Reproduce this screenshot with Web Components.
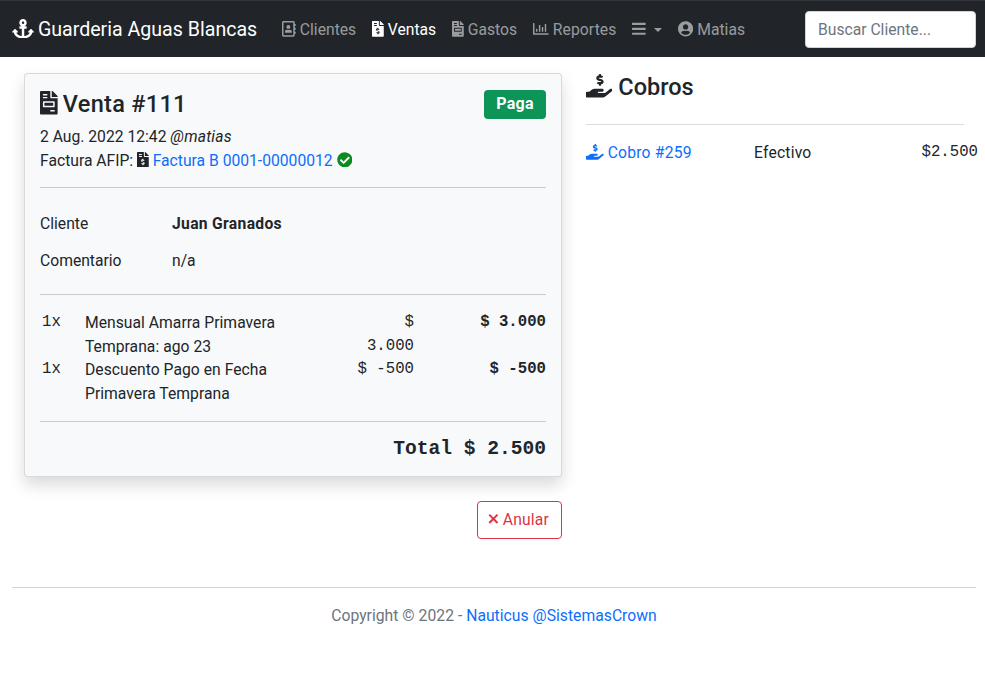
<!DOCTYPE html>
<html lang="es">
<head>
<meta charset="utf-8">
<title>Venta #111</title>
<style>
  html, body { margin: 0; background: #fff; }
  body {
    font-family: Roboto, "Noto Sans", sans-serif;
    font-size: 15.68px;
    line-height: 23.52px;
    color: #212529;
  }
</style>
</head>
<body>
<app-navbar></app-navbar>
<venta-page></venta-page>
<app-footer></app-footer>

<script>
const ICONS = {
  anchor: [576, 'M12.971 352h32.394C67.172 454.735 181.944 512 288 512c106.229 0 220.853-57.38 242.635-160h32.394c10.691 0 16.045-12.926 8.485-20.485l-67.029-67.029c-4.686-4.686-12.284-4.686-16.971 0l-67.029 67.029c-7.56 7.56-2.206 20.485 8.485 20.485h35.146c-20.29 54.317-84.963 86.588-144.117 94.015V256h52c6.627 0 12-5.373 12-12v-40c0-6.627-5.373-12-12-12h-52v-5.47c37.281-13.178 63.995-48.725 64-90.518C384.005 43.772 341.605.738 289.37.01 235.723-.739 192 42.525 192 96c0 41.798 26.716 77.35 64 90.53V192h-52c-6.627 0-12 5.373-12 12v40c0 6.627 5.373 12 12 12h52v190.015c-58.936-7.399-123.82-39.679-144.117-94.015h35.146c10.691 0 16.045-12.926 8.485-20.485l-67.029-67.029c-4.686-4.686-12.284-4.686-16.971 0L4.485 331.515C-3.074 339.074 2.28 352 12.971 352zM288 64c17.645 0 32 14.355 32 32s-14.355 32-32 32-32-14.355-32-32 14.355-32 32-32z'],
  book: [448, 'M436 160c6.6 0 12-5.4 12-12v-40c0-6.6-5.4-12-12-12h-20V48c0-26.5-21.5-48-48-48H48C21.5 0 0 21.5 0 48v416c0 26.5 21.5 48 48 48h320c26.5 0 48-21.5 48-48v-48h20c6.6 0 12-5.4 12-12v-40c0-6.6-5.4-12-12-12h-20v-64h20c6.6 0 12-5.4 12-12v-40c0-6.6-5.4-12-12-12h-20v-64h20zm-68 304H48V48h320v416zM208 256c35.3 0 64-28.7 64-64s-28.7-64-64-64-64 28.7-64 64 28.7 64 64 64zm-89.6 128h179.2c12.4 0 22.4-8.6 22.4-19.2v-19.2c0-31.8-30.1-57.6-67.2-57.6-10.8 0-18.7 8-44.8 8-26.9 0-33.4-8-44.8-8-37.1 0-67.2 25.8-67.2 57.6v19.2c0 10.6 10 19.2 22.4 19.2z'],
  dollar: [384, 'M377 105L279.1 7c-4.5-4.5-10.6-7-17-7H256v128h128v-6.1c0-6.3-2.5-12.4-7-16.9zm-153 31V0H24C10.7 0 0 10.7 0 24v464c0 13.3 10.7 24 24 24h336c13.3 0 24-10.7 24-24V160H248c-13.2 0-24-10.8-24-24zM64 72c0-4.42 3.58-8 8-8h80c4.42 0 8 3.58 8 8v16c0 4.42-3.58 8-8 8H72c-4.42 0-8-3.58-8-8V72zm0 64c0-4.42 3.58-8 8-8h80c4.42 0 8 3.58 8 8v16c0 4.42-3.58 8-8 8H72c-4.42 0-8-3.58-8-8v-16zm144 263.88V424c0 4.42-3.58 8-8 8h-16c-4.42 0-8-3.58-8-8v-24.29c-11.29-.58-22.27-4.52-31.37-11.35-3.9-2.93-4.1-8.77-.57-12.14l11.75-11.21c2.77-2.64 6.89-2.76 10.13-.73 3.87 2.42 8.26 3.72 12.82 3.72h28.11c6.5 0 11.8-5.92 11.8-13.19 0-5.95-3.61-11.19-8.77-12.73l-45-13.5c-18.59-5.58-31.58-23.42-31.58-43.39 0-24.52 19.05-44.44 42.67-45.07V232c0-4.42 3.58-8 8-8h16c4.42 0 8 3.58 8 8v24.29c11.29.58 22.27 4.51 31.37 11.35 3.9 2.93 4.1 8.77.57 12.14l-11.75 11.21c-2.77 2.64-6.89 2.76-10.13.73-3.87-2.43-8.26-3.72-12.82-3.72h-28.11c-6.5 0-11.8 5.92-11.8 13.19 0 5.95 3.61 11.19 8.77 12.73l45 13.5c18.59 5.58 31.58 23.42 31.58 43.39 0 24.53-19.05 44.44-42.67 45.07z'],
  invoice: [384, 'M288 256H96v64h192v-64zm89-151L279.1 7c-4.5-4.5-10.6-7-17-7H256v128h128v-6.1c0-6.3-2.5-12.4-7-16.9zm-153 31V0H24C10.7 0 0 10.7 0 24v464c0 13.3 10.7 24 24 24h336c13.3 0 24-10.7 24-24V160H248c-13.2 0-24-10.8-24-24zM64 72c0-4.42 3.58-8 8-8h80c4.42 0 8 3.58 8 8v16c0 4.42-3.58 8-8 8H72c-4.42 0-8-3.58-8-8V72zm0 64c0-4.42 3.58-8 8-8h80c4.42 0 8 3.58 8 8v16c0 4.42-3.58 8-8 8H72c-4.42 0-8-3.58-8-8v-16zm256 304c0 4.42-3.58 8-8 8h-80c-4.42 0-8-3.58-8-8v-16c0-4.42 3.58-8 8-8h80c4.42 0 8 3.58 8 8v16zm0-200v96c0 8.84-7.16 16-16 16H80c-8.84 0-16-7.16-16-16v-96c0-8.84 7.16-16 16-16h224c8.84 0 16 7.16 16 16z'],
  chart: [512, 'M396.8 352h22.4c6.4 0 12.8-6.4 12.8-12.8V108.8c0-6.4-6.4-12.8-12.8-12.8h-22.4c-6.4 0-12.8 6.4-12.8 12.8v230.4c0 6.4 6.4 12.8 12.8 12.8zm-192 0h22.4c6.4 0 12.8-6.4 12.8-12.8V140.8c0-6.4-6.4-12.8-12.8-12.8h-22.4c-6.4 0-12.8 6.4-12.8 12.8v198.4c0 6.4 6.4 12.8 12.8 12.8zm96 0h22.4c6.4 0 12.8-6.4 12.8-12.8V204.8c0-6.4-6.4-12.8-12.8-12.8h-22.4c-6.4 0-12.8 6.4-12.8 12.8v134.4c0 6.4 6.4 12.8 12.8 12.8zM496 400H48V80c0-8.84-7.16-16-16-16H16C7.16 64 0 71.16 0 80v336c0 17.67 14.33 32 32 32h464c8.84 0 16-7.16 16-16v-16c0-8.84-7.16-16-16-16zm-387.2-48h22.4c6.4 0 12.8-6.4 12.8-12.8v-70.4c0-6.4-6.4-12.8-12.8-12.8h-22.4c-6.4 0-12.8 6.4-12.8 12.8v70.4c0 6.4 6.4 12.8 12.8 12.8z'],
  bars: [448, 'M16 132h416c8.837 0 16-7.163 16-16V76c0-8.837-7.163-16-16-16H16C7.163 60 0 67.163 0 76v40c0 8.837 7.163 16 16 16zm0 160h416c8.837 0 16-7.163 16-16v-40c0-8.837-7.163-16-16-16H16c-8.837 0-16 7.163-16 16v40c0 8.837 7.163 16 16 16zm0 160h416c8.837 0 16-7.163 16-16v-40c0-8.837-7.163-16-16-16H16c-8.837 0-16 7.163-16 16v40c0 8.837 7.163 16 16 16z'],
  user: [496, 'M248 8C111 8 0 119 0 256s111 248 248 248 248-111 248-248S385 8 248 8zm0 96c48.6 0 88 39.4 88 88s-39.4 88-88 88-88-39.4-88-88 39.4-88 88-88zm0 344c-58.7 0-111.3-26.6-146.5-68.2 18.8-35.4 55.6-59.8 98.5-59.8 2.4 0 4.8.4 7.1 1.1 13 4.2 26.6 6.9 40.9 6.9 14.3 0 28-2.7 40.9-6.9 2.3-.7 4.7-1.1 7.1-1.1 42.9 0 79.7 24.4 98.5 59.8C359.3 421.4 306.7 448 248 448z'],
  hand: [576, 'M271.06,144.3l54.27,14.3a8.59,8.59,0,0,1,6.63,8.1c0,4.6-4.09,8.4-9.12,8.4h-35.6a30,30,0,0,1-11.19-2.2c-5.24-2.2-11.28-1.7-15.3,2l-19,17.5a11.68,11.68,0,0,0-2.25,2.66,11.42,11.42,0,0,0,3.88,15.74,83.42,83.42,0,0,0,34.51,11.5V240c0,8.8,7.83,16,17.37,16h17.37c9.55,0,17.38-7.2,17.38-16V222.4c32.93-3.6,57.84-31,53.5-63-3.15-23-22.46-41.3-46.56-47.7L282.68,97.4a8.59,8.59,0,0,1-6.63-8.1c0-4.6,4.09-8.4,9.12-8.4h35.6A30,30,0,0,1,332,83.1c5.23,2.2,11.28,1.7,15.3-2l19-17.5A11.31,11.31,0,0,0,368.47,61a11.43,11.43,0,0,0-3.84-15.78,83.82,83.82,0,0,0-34.52-11.5V16c0-8.8-7.82-16-17.37-16H295.37C285.82,0,278,7.2,278,16V33.6c-32.89,3.6-57.85,31-53.51,63C227.63,119.6,247,137.9,271.06,144.3ZM565.27,328.1c-11.8-10.7-30.2-10-42.6,0L430.27,402a63.64,63.64,0,0,1-40,14H272a16,16,0,0,1,0-32h78.29c15.9,0,30.71-10.9,33.25-26.6a31.2,31.2,0,0,0,.46-5.46A32,32,0,0,0,352,320H192a117.66,117.66,0,0,0-74.1,26.29L71.4,384H16A16,16,0,0,0,0,400v96a16,16,0,0,0,16,16H372.77a64,64,0,0,0,40-14L564,377a32,32,0,0,0,1.28-48.9Z'],
  check: [512, 'M504 256c0 136.967-111.033 248-248 248S8 392.967 8 256 119.033 8 256 8s248 111.033 248 248zM227.314 387.314l184-184c6.248-6.248 6.248-16.379 0-22.627l-22.627-22.627c-6.248-6.249-16.379-6.249-22.628 0L216 308.118l-70.059-70.059c-6.248-6.248-16.379-6.248-22.628 0l-22.627 22.627c-6.248 6.248-6.248 16.379 0 22.627l104 104c6.249 6.25 16.379 6.25 22.628.001z'],
  times: [352, 'M176 210L288 96l46 46-112 114 112 114-46 46-112-114L64 416l-46-46 112-114L18 142l46-46z'],
};

class FaIcon extends HTMLElement {
  connectedCallback() {
    if (this.shadowRoot) return;
    const [w, d] = ICONS[this.getAttribute('name')];
    this.attachShadow({ mode: 'open' }).innerHTML = `
      <style>
        :host { display: inline-block; height: 1em; width: ${w / 512}em; vertical-align: -0.125em; }
        svg { display: block; width: 100%; height: 100%; fill: currentColor; }
      </style>
      <svg viewBox="0 0 ${w} 512" aria-hidden="true"><path d="${d}"/></svg>`;
  }
}
customElements.define('fa-icon', FaIcon);

class AppNavbar extends HTMLElement {
  constructor() {
    super();
    this.attachShadow({ mode: 'open' }).innerHTML = `
      <style>
        :host { display: flex; align-items: center; height: 57px; padding: 1px 9px 0 12px; box-sizing: border-box; background: #212529; border-top: 1px solid #33363a; }
        .brand { font-size: 19.6px; color: #fff; white-space: nowrap; margin-right: 25px; }
        .brand fa-icon { margin-right: -1px; }
        nav { display: flex; gap: 16px; flex: 1; align-items: center; white-space: nowrap; color: rgba(255,255,255,.55); }
        nav span.on { color: #fff; }
        nav span.wide { letter-spacing: .1px; }
        .caret { display: inline-block; margin-left: 8px; vertical-align: 3px; border-top: 4.8px solid; border-left: 4.8px solid transparent; border-right: 4.8px solid transparent; }
        input { width: 171px; height: 37.5px; box-sizing: border-box; padding: 6px 12px; border: 1px solid #ced4da; border-radius: 4px; font: inherit; background: #fff; }
        input::placeholder { color: #6c757d; opacity: 1; }
      </style>
      <span class="brand"><fa-icon name="anchor"></fa-icon> Guarderia Aguas Blancas</span>
      <nav>
        <span><fa-icon name="book"></fa-icon> Clientes</span>
        <span class="on"><fa-icon name="dollar"></fa-icon> Ventas</span>
        <span><fa-icon name="invoice"></fa-icon> Gastos</span>
        <span class="wide"><fa-icon name="chart"></fa-icon> Reportes</span>
        <span><fa-icon name="bars"></fa-icon><i class="caret"></i></span>
        <span><fa-icon name="user"></fa-icon> Matias</span>
      </nav>
      <input placeholder="Buscar Cliente...">`;
  }
}
customElements.define('app-navbar', AppNavbar);

class VentaLine extends HTMLElement {
  constructor() {
    super();
    this.attachShadow({ mode: 'open' }).innerHTML = `
      <style>
        :host { display: grid; grid-template-columns: 45px 1fr 62px 132px; }
        .mono { font-family: "Liberation Mono", monospace; }
        .qty { padding-left: 2px; }
        .desc { max-width: 205px; letter-spacing: .03px; }
        .price { text-align: right; }
        .total { text-align: right; font-weight: 700; }
      </style>
      <span class="mono qty"></span>
      <span class="desc"></span>
      <span class="mono price"></span>
      <span class="mono total"></span>`;
  }
  connectedCallback() {
    const $ = s => this.shadowRoot.querySelector(s);
    $('.qty').textContent = this.getAttribute('qty');
    $('.desc').textContent = this.getAttribute('desc');
    $('.price').textContent = this.getAttribute('price');
    $('.total').textContent = this.getAttribute('total');
  }
}
customElements.define('venta-line', VentaLine);

class VentaCard extends HTMLElement {
  constructor() {
    super();
    this.attachShadow({ mode: 'open' }).innerHTML = `
      <style>
        :host { display: block; padding: 16px 15px; background: #f8f9fa; border: 1px solid rgba(0,0,0,.125); border-radius: 4px; box-shadow: 0 8px 16px rgba(0,0,0,.15); }
        a { color: #0d6efd; text-decoration: none; }
        hr { border: 0; height: 1px; margin: 0; background: #c9cacb; }
        header { display: flex; justify-content: space-between; align-items: flex-start; height: 35px; }
        h4 { margin: 0; font-size: 23.52px; line-height: 28px; font-weight: 500; color: #212529; letter-spacing: .3px; }
        h4 fa-icon { margin-right: -1px; }
        .badge { display: block; width: 62px; height: 29px; line-height: 28px; text-align: center; border-radius: 4px; background: #0d9558; color: #fff; font-weight: 700; font-size: 16px; letter-spacing: .3px; }
        .meta { margin: 0 0 15px; }
        .meta p { margin: 0; }
        .meta em { letter-spacing: .2px; }
        .ok { color: #0a8a1f; }
        dl { display: grid; grid-template-columns: 132px 1fr; row-gap: 13.5px; margin: 24px 0 21.5px; }
        dd { margin: 0; }
        dd.name { font-weight: 700; letter-spacing: .3px; }
        .lines { padding: 16px 0; }
        .total { padding-top: 15px; margin-bottom: -1px; text-align: right; font: 700 19.6px/24px "Liberation Mono", monospace; }
      </style>
      <header>
        <h4><fa-icon name="invoice"></fa-icon> Venta #111</h4>
        <span class="badge">Paga</span>
      </header>
      <div class="meta">
        <p>2 Aug. 2022 12:42 <em>@matias</em></p>
        <p>Factura AFIP: <fa-icon name="dollar"></fa-icon> <a href="#">Factura B 0001-00000012</a> <fa-icon class="ok" name="check"></fa-icon></p>
      </div>
      <hr>
      <dl>
        <dt>Cliente</dt><dd class="name">Juan Granados</dd>
        <dt>Comentario</dt><dd>n/a</dd>
      </dl>
      <hr>
      <div class="lines">
        <venta-line qty="1x" desc="Mensual Amarra Primavera Temprana: ago 23" price="$ 3.000" total="$ 3.000"></venta-line>
        <venta-line qty="1x" desc="Descuento Pago en Fecha Primavera Temprana" price="$ -500" total="$ -500"></venta-line>
      </div>
      <hr>
      <div class="total">Total $ 2.500</div>`;
  }
}
customElements.define('venta-card', VentaCard);

class CobrosPanel extends HTMLElement {
  constructor() {
    super();
    this.attachShadow({ mode: 'open' }).innerHTML = `
      <style>
        :host { display: block; }
        a { color: #0d6efd; text-decoration: none; }
        h4 { margin: 0 0 22px; font-size: 23.52px; line-height: 29px; font-weight: 500; color: #212529; }
        hr { border: 0; height: 1px; margin: 0; background: #dcdcdc; }
        .row { display: grid; grid-template-columns: 168px 1fr auto; margin: 16px -14px 0 0; letter-spacing: .2px; }
        .amount { font-family: "Liberation Mono", monospace; letter-spacing: 0; }
      </style>
      <h4><fa-icon name="hand"></fa-icon> Cobros</h4>
      <hr>
      <div class="row">
        <a href="#"><fa-icon name="hand"></fa-icon> Cobro #259</a>
        <span>Efectivo</span>
        <span class="amount">$2.500</span>
      </div>`;
  }
}
customElements.define('cobros-panel', CobrosPanel);

class VentaPage extends HTMLElement {
  constructor() {
    super();
    this.attachShadow({ mode: 'open' }).innerHTML = `
      <style>
        :host { display: grid; grid-template-columns: 538px 378px; column-gap: 24px; padding: 16px 0 0 24px; }
        .actions { display: flex; justify-content: flex-end; margin-top: 24px; }
        button { height: 37.5px; width: 85px; padding: 0; font: inherit; letter-spacing: .2px; color: #dc3545; background: transparent; border: 1px solid #dc3545; border-radius: 4px; }
        button fa-icon { margin-left: -2px; }
      </style>
      <div>
        <venta-card></venta-card>
        <div class="actions"><button><fa-icon name="times"></fa-icon> Anular</button></div>
      </div>
      <cobros-panel></cobros-panel>`;
  }
}
customElements.define('venta-page', VentaPage);

class AppFooter extends HTMLElement {
  constructor() {
    super();
    this.attachShadow({ mode: 'open' }).innerHTML = `
      <style>
        :host { display: block; margin: 48.5px 9px 0 12px; padding-top: 16px; border-top: 1px solid #d3d4d5; text-align: center; color: #6c757d; letter-spacing: .03px; }
        a { color: #0d6efd; text-decoration: none; }
      </style>
      Copyright © 2022 - <a href="#">Nauticus</a> <a href="#">@SistemasCrown</a>`;
  }
}
customElements.define('app-footer', AppFooter);
</script>
</body>
</html>
